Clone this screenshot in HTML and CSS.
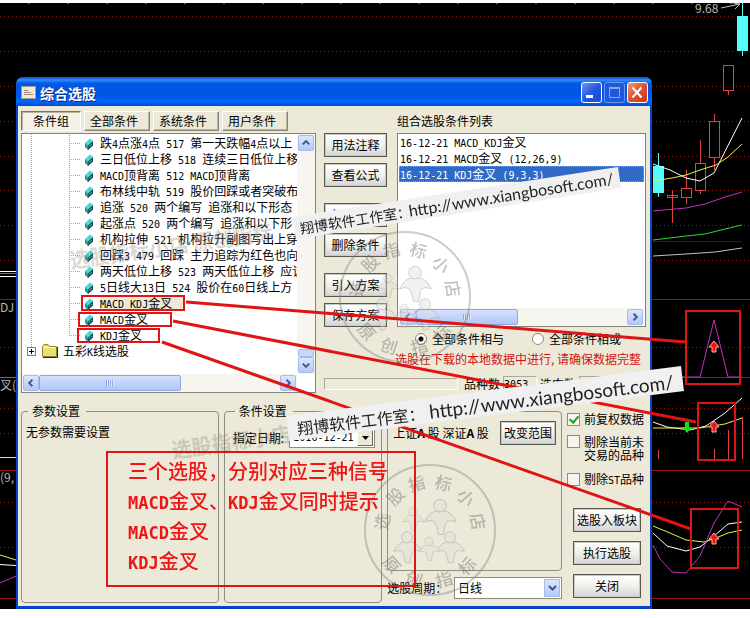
FILE: index.html
```html
<!DOCTYPE html>
<html lang="zh">
<head>
<meta charset="UTF-8">
<title>综合选股</title>
<link rel="stylesheet" href="styles.css">
</head>
<body>
<div class="desktop">
  <!-- 背景K线图 -->
  <svg class="layer" viewBox="0 0 750 618" aria-hidden="true">
    <g class="grid-dots">
      <path d="M0 16.5H736M0 51.5H736M0 86.5H750M0 121.5H750M0 156.5H750M0 190.5H750M0 225.5H750M0 260.5H750M0 347.5H750M0 408.5H750M0 433.5H750M0 502.5H750M0 547.5H750"/>
    </g>
    <path class="grid-line" d="M0 299.5H750M0 377.5H750M0 470.5H750M0 598.5H750"/>
    <path class="ticks" d="M28 3.5H750"/>
    <g class="fall">
      <path d="M742.5 3V56M658.5 153V197"/>
      <rect x="737" y="16" width="11" height="35"/>
      <rect x="653" y="166" width="11" height="27"/>
    </g>
    <g class="rise">
      <rect x="723.5" y="65.5" width="10" height="25"/>
      <rect x="709.5" y="121.5" width="10" height="36"/>
      <rect x="695.5" y="163.5" width="10" height="27"/>
      <rect x="681.5" y="188.5" width="10" height="9"/>
      <rect x="667.5" y="195.5" width="10" height="2"/>
      <path d="M728.5 90V95M714.5 114V121M714.5 157V170M700.5 140V163M700.5 190V194M686.5 170V188M686.5 197V204M672.5 190V223"/>
    </g>
    <g class="curve white">
      <path d="M653 164L670 170L686 178L700 181L714 173L742 118"/>
      <path d="M653 422L667 427L690 430L706 426L725 413L742 398"/>
      <path d="M653 533L667 546L686 551L700 547L714 536L728 524L742 522"/>
      <path d="M0 271.5H16M0 276.5H16M0 564.5L16 565.5"/>
    </g>
    <g class="curve yellow">
      <path d="M653 181L672 178L686 175L700 170L716 165L728 157L742 144"/>
      <path d="M653 428L700 428L725 424L742 418"/>
      <path d="M653 526L670 533L686 540L704 542L716 538L728 533L742 530"/>
      <path d="M0 457.5H16M0 555L16 560"/>
    </g>
    <g class="curve pink">
      <path d="M653 211L686 208L705 204L725 197L742 192"/>
      <path d="M675 377H700L714 320L728 377H742"/>
      <path d="M653 545L660 559L672 572L686 573L700 556L714 523L728 501L742 507"/>
      <path d="M0 377.5H16M0 273.5H16M0 583L16 576"/>
    </g>
    <path class="curve green" d="M653 240L686 236L705 234L725 229L742 225"/>
    <path class="curve blue" d="M653 241.5H742"/>
    <path class="curve silver" d="M653 256L686 254L715 252L742 248"/>
    <path class="rise" d="M658.5 450V459M714.5 449V459M728.5 430V459M742.5 417V459"/>
    <path class="curve silver" d="M721 8L740 4M733 3L740 4L735 9"/>
    <g class="chart-text">
      <text x="695" y="13">9.68</text>
      <text x="0" y="312">DJ</text>
      <text x="0" y="390">叉(</text>
      <text x="0" y="482">(9,</text>
    </g>
  </svg>

  <div class="dialog">
    <div class="titlebar">
      <svg class="app-icon" width="15" height="13" viewBox="0 0 15 13" aria-hidden="true">
        <rect x=".5" y=".5" width="14" height="12" fill="#eee9dc" stroke="#a49c8c"/>
        <path d="M3 4.5h4M3 6.5h7M3 8.5h9" stroke="#a08f78"/>
      </svg>
      <h1>综合选股</h1>
      <button class="win-btn" aria-label="最小化"><svg width="21" height="21" viewBox="0 0 21 21"><path d="M5 14.5h7" stroke="#fff" stroke-width="3"/></svg></button>
      <button class="win-btn dim" aria-label="最大化"><svg width="21" height="21" viewBox="0 0 21 21"><path d="M5.5 6v9.5h10V6" fill="none" stroke="#86a8f0"/><path d="M5 6h11" stroke="#86a8f0" stroke-width="2"/></svg></button>
      <button class="win-btn close" aria-label="关闭窗口"><svg width="21" height="21" viewBox="0 0 21 21"><path d="M5.5 5.5l9 10M14.5 5.5l-9 10" stroke="#fff" stroke-width="2"/></svg></button>
    </div>

    <div class="client">
      <div class="upper">
        <div class="left">
          <div class="tabs">
            <button class="tab active">条件组</button>
            <button class="tab">全部条件</button>
            <button class="tab">系统条件</button>
            <button class="tab">用户条件</button>
          </div>
          <div class="tree-box">
            <div class="tree">
              <ul class="items">
                <li><svg class="gem"><use href="#gem"/></svg>跌<i>4</i>点涨<i>4</i>点<i> 517 </i>第一天跌幅<i>4</i>点以上</li>
                <li><svg class="gem"><use href="#gem"/></svg>三日低位上移<i> 518 </i>连续三日低位上移</li>
                <li><svg class="gem"><use href="#gem"/></svg><i>MACD</i>顶背离<i> 512 MACD</i>顶背离</li>
                <li><svg class="gem"><use href="#gem"/></svg>布林线中轨<i> 519 </i>股价回踩或者突破布</li>
                <li><svg class="gem"><use href="#gem"/></svg>追涨<i> 520 </i>两个编写<i> </i>追涨和以下形态</li>
                <li><svg class="gem"><use href="#gem"/></svg>起涨点<i> 520 </i>两个编写<i> </i>追涨和以下形</li>
                <li><svg class="gem"><use href="#gem"/></svg>机构拉伸<i> 521 </i>机构拉升副图写出上穿</li>
                <li><svg class="gem"><use href="#gem"/></svg>回踩<i>3 479 </i>回踩<i> </i>主力追踪为红色也向</li>
                <li><svg class="gem"><use href="#gem"/></svg>两天低位上移<i> 523 </i>两天低位上移<i> </i>应该</li>
                <li><svg class="gem"><use href="#gem"/></svg><i>5</i>日线大<i>13</i>日<i> 524 </i>股价在<i>60</i>日线上方</li>
                <li><svg class="gem"><use href="#gem"/></svg><span class="picked"><i>MACD KDJ</i>金叉</span></li>
                <li><svg class="gem"><use href="#gem"/></svg><i>MACD</i>金叉</li>
                <li><svg class="gem"><use href="#gem"/></svg><i>KDJ</i>金叉</li>
              </ul>
              <div class="folder">
                <span class="expander"></span>
                <svg width="16" height="14" viewBox="0 0 16 14" aria-hidden="true"><path d="M.5 12.5V2.5l1.500-2h4l1.500 2h7v10z" fill="#e6e06c" stroke="#8a8632"/><path d="M1.500 3.5h12" stroke="#fffcc0"/><path d="M1 13.5h14.500V3" fill="none" stroke="#222"/></svg>
                <span>五彩<i>K</i>线选股</span>
              </div>
            </div>
            <div class="vscroll">
              <button class="sb" aria-label="向上滚动"><svg viewBox="0 0 15 15"><path d="M4 9l3.500-3.500L11 9"/></svg></button>
              <span class="vthumb"></span>
              <button class="sb" aria-label="向下滚动"><svg viewBox="0 0 15 15"><path d="M4 6l3.500 3.500L11 6"/></svg></button>
            </div>
            <div class="hscroll">
              <button class="sb" aria-label="向左滚动"><svg viewBox="0 0 15 15"><path d="M9 4L5.500 7.500L9 11"/></svg></button>
              <span class="hthumb wide"><b></b></span>
              <button class="sb" aria-label="向右滚动"><svg viewBox="0 0 15 15"><path d="M6 4l3.500 3.500L6 11"/></svg></button>
            </div>
          </div>
        </div>

        <div class="middle">
          <button class="btn">用法注释</button>
          <button class="btn">查看公式</button>
          <button class="btn gap">加入条件</button>
          <button class="btn">删除条件</button>
          <button class="btn gap">引入方案</button>
          <button class="btn">保存方案</button>
        </div>

        <div class="right">
          <h2>组合选股条件列表</h2>
          <div class="list-box">
            <ul class="list">
              <li><i>16-12-21 MACD_KDJ</i>金叉</li>
              <li><i>16-12-21 MACD</i>金叉<i> (12,26,9)</i></li>
              <li class="selected"><i>16-12-21 KDJ</i>金叉<i> (9,3,3)</i></li>
            </ul>
            <div class="hscroll">
              <button class="sb" aria-label="列表向左滚动"><svg viewBox="0 0 15 15"><path d="M9 4L5.500 7.500L9 11"/></svg></button>
              <span class="hthumb half"><b></b></span>
              <button class="sb" aria-label="列表向右滚动"><svg viewBox="0 0 15 15"><path d="M6 4l3.500 3.500L6 11"/></svg></button>
            </div>
          </div>
          <div class="radios">
            <label><input type="radio" name="mode" checked>全部条件相与</label>
            <label><input type="radio" name="mode">全部条件相或</label>
          </div>
          <p class="warn">选股在下载的本地数据中进行, 请确保数据完整</p>
        </div>

        <div class="status">
          <span class="progress"></span>
          <span>品种数</span><output class="count"><i>3053</i></output>
          <span>选中数</span><output class="count"></output>
        </div>
      </div>

      <div class="lower">
        <fieldset class="params">
          <legend>参数设置</legend>
          <p>无参数需要设置</p>
        </fieldset>
        <fieldset class="conds">
          <legend>条件设置</legend>
          <div class="date-row">
            <label for="date">指定日期:</label>
            <span class="combo classic">
              <select id="date"><option>2016-12-21</option></select>
              <span class="arrow"><svg width="9" height="5" viewBox="0 0 9 5"><path d="M1 0h7L4.500 4z"/></svg></span>
            </span>
          </div>
        </fieldset>
        <div class="range-col">
          <div class="range">
            <span>上证<b>A</b> 股 深证<b>A</b> 股</span>
            <button class="btn">改变范围</button>
          </div>
          <div class="period">
            <label for="period">选股周期：</label>
            <span class="combo">
              <select id="period"><option>日线</option></select>
              <span class="arrow"><svg width="9" height="7" viewBox="0 0 9 7"><path d="M1 1l3.500 3.500L8 1" fill="none" stroke="#3c5480" stroke-width="2"/></svg></span>
            </span>
          </div>
        </div>
        <div class="actions">
          <label class="check"><input type="checkbox" checked>前复权数据</label>
          <label class="check two"><input type="checkbox"><span>剔除当前未<br>交易的品种</span></label>
          <label class="check"><input type="checkbox"><span>剔除<i>ST</i>品种</span></label>
          <div class="run">
            <button class="btn">选股入板块</button>
            <button class="btn">执行选股</button>
            <button class="btn">关闭</button>
          </div>
        </div>
      </div>
    </div>
  </div>

  <!-- 标注层：水印、红框、连线 -->
  <svg class="layer notes" viewBox="0 0 750 618">
    <defs>
      <symbol id="gem" viewBox="0 0 10 12">
        <path d="M1 5L6 .5L9 3L4 7.500z" fill="#4cd8d4"/>
        <path d="M1 5L4 7.500V12L1 9z" fill="#149c9c"/>
        <path d="M4 7.500L9 3V7.500L4 12z" fill="#0c4c50"/>
        <path d="M4.500 9L8 6" stroke="#38b8b8"/>
      </symbol>
      <g id="person">
        <path d="M0 10C-8 9-13 14-17 22Q-11 19-6 22Q-3 27-2 36H4Q5 27 7 22Q12 19 18 22C15 14 9 9 0 10Z"/>
        <circle cx="0" cy="4" r="7"/>
      </g>
      <g id="seal">
        <circle r="65"/>
        <g class="people">
          <use href="#person" transform="translate(-17 -21) scale(.6)"/>
          <use href="#person" transform="translate(10 -28) scale(.9)"/>
          <use href="#person" transform="translate(-23 4) scale(.8)"/>
          <use href="#person" transform="translate(20 4) scale(.8)"/>
          <use href="#person" transform="translate(-1 9) scale(.6)"/>
        </g>
        <g class="seal-text">
          <text transform="rotate(-80) translate(0 -42)">选</text>
          <text transform="rotate(-46) translate(0 -42)">股</text>
          <text transform="rotate(-16) translate(0 -42)">指</text>
          <text transform="rotate(16) translate(0 -42)">标</text>
          <text transform="rotate(48) translate(0 -42)">小</text>
          <text transform="rotate(80) translate(0 -42)">店</text>
          <text transform="rotate(48) translate(0 58)">原</text>
          <text transform="rotate(18) translate(0 58)">创</text>
          <text transform="rotate(-16) translate(0 58)">指</text>
          <text transform="rotate(-46) translate(0 58)">标</text>
        </g>
      </g>
      <path id="up" d="M0-6L5 0H2V5H-2V0H-5Z"/>
    </defs>

    <g class="seal">
      <use href="#seal" x="405" y="297"/>
      <use href="#seal" x="430" y="530"/>
    </g>
    <g class="ghost">
      <text transform="translate(71 268) rotate(-8)">选股指标小店 原创指标</text>
      <text transform="translate(173 458) rotate(-8)">选股指标小店</text>
    </g>

    <path class="link" d="M186 302L686 342M173 321L696 422M162 342L691 529"/>
    <g class="frame">
      <rect x="82" y="296" width="102" height="14"/>
      <rect x="79" y="313" width="92" height="13"/>
      <rect x="78" y="329" width="81" height="13"/>
      <rect x="107" y="452" width="308" height="134"/>
      <rect x="686" y="311" width="54" height="73"/>
      <rect x="698" y="403" width="37" height="57"/>
      <rect x="691" y="509" width="47" height="59"/>
    </g>
    <g class="arrow-up">
      <use href="#up" x="714" y="347"/>
      <use href="#up" x="714" y="427"/>
      <use href="#up" x="714" y="539"/>
    </g>
    <use class="arrow-down" href="#up" transform="translate(687 427) scale(1 -1)"/>

    <g class="red-note">
      <text x="128" y="479">三个选股，分别对应三种信号</text>
      <text x="128" y="509"><tspan class="mono">MACD</tspan>金叉、<tspan class="mono" x="228">KDJ</tspan>金叉同时提示</text>
      <text x="128" y="539"><tspan class="mono">MACD</tspan>金叉</text>
      <text x="128" y="569"><tspan class="mono">KDJ</tspan>金叉</text>
    </g>

    <path class="banner" d="M292 217L618 167L621 188L296 239Z"/>
    <text class="banner-text small" transform="translate(301 234) rotate(-9)">翔博软件工作室：<tspan class="url" x="110">http://www.xiangbosoft.com/</tspan></text>
    <path class="banner" d="M286 416L681 366L684 391L289 441Z"/>
    <text class="banner-text" transform="translate(298 435) rotate(-7)">翔博软件工作室：<tspan class="url" x="133">http://www.xiangbosoft.com/</tspan></text>
  </svg>
</div>
</body>
</html>
```
FILE: styles.css
```css
* {
    box-sizing: border-box;
}
body {
    margin: 0;
    background: #fff;
    color: #000;
    font: 12px/16px "Noto Sans CJK SC", sans-serif;
}
h1, h2, p, ul {
    margin: 0;
    padding: 0;
    list-style: none;
    font-size: 12px;
    font-weight: normal;
}
button, select {
    font: inherit;
    color: #000;
    padding: 0;
    border-radius: 0;
}
i {
    font: 10px/12px "DejaVu Sans Mono", monospace;
    white-space: pre;
}
.desktop {
    background: #000;
    border-top: 3px solid #fff;
    padding: 74px 98px 0 16px;
}
.layer {
    position: absolute;
    top: 0;
    left: 0;
    width: 100%;
    height: auto;
}

/* 背景图 */
.grid-dots {
    stroke: #8c1410;
    stroke-dasharray: 1 3;
}
.grid-line {
    stroke: #a01014;
}
.ticks {
    stroke: #a030a0;
    stroke-dasharray: 2 37;
}
.fall {
    stroke: #54fcfc;
    fill: #54fcfc;
}
.fall rect {
    stroke: none;
}
.rise {
    stroke: #d84444;
    fill: #000;
}
.curve {
    fill: none;
    stroke-width: 1;
}
.white { stroke: #fff; }
.yellow { stroke: #f0f040; }
.pink { stroke: #c030c0; }
.green { stroke: #30d830; }
.blue { stroke: #1010b0; }
.silver { stroke: #c0c0c0; }
.chart-text {
    fill: #b8b8b8;
    font-size: 12px;
}

/* 对话框 */
.dialog {
    position: relative;
    background: #0842c8;
    border-radius: 7px 7px 0 0;
    padding: 0 2px 3px;
}
.titlebar {
    display: flex;
    align-items: center;
    gap: 2px;
    height: 29px;
    margin: 0 -2px;
    padding: 2px 4px 0 5px;
    border-radius: 7px 7px 0 0;
    background: linear-gradient(#0848c8, #3090ff 10%, #0458e4 22%, #0054e4 60%, #0066fc 85%, #0048d0);
}
.titlebar h1 {
    flex: 1;
    margin-left: 2px;
    color: #fff;
    font-size: 14px;
    font-weight: bold;
    text-shadow: 1px 1px #102878;
}
.win-btn {
    width: 21px;
    height: 21px;
    border: 1px solid #fff;
    border-radius: 3px;
    background: linear-gradient(135deg, #6c94f4, #2458e0 50%, #1c48d0);
}
.win-btn svg {
    display: block;
    margin: -1px;
}
.win-btn.dim {
    border-color: #6c94f0;
    background: #2058dc;
}
.win-btn.close {
    background: linear-gradient(135deg, #f09878, #e05030 50%, #c83c18);
}
.client {
    background: #ece9d8;
    padding: 5px 4px 3px 3px;
}
.upper {
    display: grid;
    grid-template-columns: 294fr 63px 250fr;
    gap: 0 8px;
}
.tabs {
    display: flex;
    gap: 3px;
}
.tab {
    width: 66px;
    height: 20px;
    padding-right: 6px;
    border: 1px solid;
    border-color: #fff #8c8674 #8c8674 #fff;
    box-shadow: inset -1px -1px #b8b4a0;
    background: #ece9d8;
}
.tab.active {
    width: 60px;
    padding: 0;
    border-color: #7c7868 #fff #fff #7c7868;
    box-shadow: inset 1px 1px #b8b4a0;
    background: #f4f2e8;
}
.tree-box, .list-box {
    background: #fff;
    border: 1px solid #848478;
}
.tree-box {
    display: grid;
    grid-template: 240px 18px / minmax(0, 1fr) 18px;
    margin-top: 2px;
}
.tree {
    overflow: hidden;
    padding: 1px 0 0 9px;
    background: repeating-linear-gradient(#a8a490 0 1px, #fff 1px 2px) 9px 0 / 1px 216px no-repeat;
}
.items {
    margin-left: 38px;
    background: repeating-linear-gradient(#a8a490 0 1px, #fff 1px 2px) 0 0 / 1px 200px no-repeat;
}
.items li {
    height: 16px;
    white-space: nowrap;
    padding-left: 15px;
    background: repeating-linear-gradient(90deg, #a8a490 0 1px, #fff 1px 2px) 0 8px / 12px 1px no-repeat;
}
.gem {
    width: 10px;
    height: 12px;
    margin: -2px 6px 0 0;
    vertical-align: middle;
}
.picked {
    display: inline-block;
    height: 14px;
    line-height: 16px;
    padding-right: 12px;
    background: #ece9d8;
}
.folder {
    display: flex;
    align-items: center;
    gap: 5px;
    height: 16px;
    margin-left: -4px;
}
.folder svg {
    margin-left: 1px;
}
.expander {
    width: 9px;
    height: 9px;
    border: 1px solid #808080;
    background: linear-gradient(#000, #000) center / 5px 1px no-repeat, linear-gradient(#000, #000) center / 1px 5px no-repeat, #fff;
}
.vscroll, .hscroll {
    display: flex;
    background: #f6f5f0;
    padding: 1px;
}
.vscroll {
    flex-direction: column;
    justify-content: space-between;
}
.sb {
    width: 16px;
    height: 16px;
    flex: none;
    border: 1px solid #a8bcec;
    border-radius: 2px;
    background: linear-gradient(#dce6fe, #b4c8f6);
}
.sb svg {
    display: block;
    fill: none;
    stroke: #405884;
    stroke-width: 2;
}
.vthumb {
    height: 8px;
    margin-top: auto;
    border: 1px solid #a0b8f0;
    border-radius: 2px;
    background: #c8d8fc;
}
.hscroll .sb:last-child {
    margin-left: auto;
}
.hthumb {
    display: flex;
    justify-content: center;
    align-items: center;
    border: 1px solid #8ca8e4;
    border-radius: 2px;
    background: linear-gradient(#d4e0fe, #b0c6f6);
}
.hthumb b {
    width: 8px;
    height: 6px;
    background: repeating-linear-gradient(90deg, #8ca4e0 0 1px, #e4ecff 1px 2px);
}
.wide {
    width: 52%;
}
.half {
    width: 42%;
}

/* 按钮 */
.btn {
    height: 24px;
    border: 1px solid #58584c;
    background: linear-gradient(#fff, #f0f0ec 50%, #d4d4d8);
    box-shadow: inset 0 0 0 1px #c8c8c4;
    line-height: 20px;
    white-space: nowrap;
}
.middle {
    display: flex;
    flex-direction: column;
    gap: 6px;
    padding-top: 22px;
}
.middle .gap {
    margin-top: 10px;
}
.right {
    padding-left: 2px;
}
.right h2 {
    height: 22px;
    line-height: 20px;
}
.list-box {
    display: flex;
    flex-direction: column;
    justify-content: space-between;
    height: 194px;
    padding: 0 1px;
}
.list li {
    padding-left: 1px;
}
.list .selected {
    background: #316ac5;
    color: #fff;
    outline: 1px dotted #c89850;
    outline-offset: -1px;
}
.radios {
    display: flex;
    gap: 28px;
    padding: 4px 0 4px 18px;
}
.radios label {
    display: flex;
    align-items: center;
    gap: 5px;
    white-space: nowrap;
}
.radios input {
    appearance: none;
    width: 12px;
    height: 12px;
    margin: 0;
    border: 1px solid #8c8878;
    border-radius: 50%;
    background: #fff;
}
.radios input:checked {
    background: radial-gradient(#000 2px, #fff 3px);
}
.warn {
    color: #d01414;
    white-space: nowrap;
    margin: 0 -2px;
}
.status {
    grid-column: 2 / 4;
    display: flex;
    gap: 3px;
    height: 16px;
    margin: -17px 0 0;
}
.status span:nth-child(2) {
    margin-left: 3px;
}
.progress {
    width: 134px;
    height: 12px;
    margin-top: 2px;
}
.progress, .count {
    border: 1px solid;
    border-color: #aca899 #fff #fff #aca899;
}
.count {
    width: 34px;
    line-height: 12px;
}

/* 下半部分 */
.lower {
    display: grid;
    grid-template-columns: 198fr 159fr 175fr 79px;
    gap: 5px;
    margin-top: 10px;
    height: 200px;
}
fieldset {
    min-width: 0;
    margin: 0;
    padding: 5px 4px 0;
    border: 1px solid #908e80;
    border-radius: 4px;
}
legend {
    margin-left: 2px;
    padding: 0 6px 0 4px;
}
.conds {
    padding: 9px 6px 0 8px;
}
.date-row, .period {
    display: flex;
    align-items: center;
    justify-content: space-between;
    white-space: nowrap;
}
.combo {
    display: flex;
    background: #fff;
    border: 1px solid #8c8c80;
    padding: 1px;
}
.combo select {
    appearance: none;
    border: 0;
    background: #fff;
    width: 88px;
    height: 18px;
    padding-left: 2px;
}
.classic select {
    width: 66px;
    height: 16px;
    font: 10px/16px "DejaVu Sans Mono", monospace;
}
.arrow {
    display: flex;
    align-items: center;
    justify-content: center;
    width: 16px;
    border: 1px solid #a8bcec;
    background: linear-gradient(#dce6fe, #b4c8f6);
}
.classic .arrow {
    border-color: #fff #6c6a60 #6c6a60 #fff;
    background: #ece9d8;
}
.range-col {
    display: flex;
    flex-direction: column;
    gap: 6px;
    padding-top: 8px;
}
.range {
    display: flex;
    justify-content: space-between;
    align-items: flex-start;
    height: 160px;
    padding: 9px 5px 0;
    border: 1px solid #908e80;
    border-radius: 4px;
    white-space: nowrap;
}
.range span {
    padding-top: 4px;
}
.range .btn {
    width: 56px;
}
.actions {
    display: flex;
    flex-direction: column;
    padding-top: 8px;
}
.check {
    display: flex;
    gap: 4px;
    align-items: center;
    height: 16px;
    white-space: nowrap;
}
.check.two {
    align-items: flex-start;
    height: 28px;
    margin: 8px 0;
    line-height: 13px;
}
.check input {
    appearance: none;
    flex: none;
    width: 13px;
    height: 13px;
    margin: 0;
    border: 1px solid #8c8c84;
    background: #f6f4ee;
}
.check input:checked::before {
    content: "";
    display: block;
    width: 4px;
    height: 7px;
    margin: 0 3px;
    border: solid #21a121;
    border-width: 0 2px 2px 0;
    transform: rotate(40deg);
}
.run {
    display: flex;
    flex-direction: column;
    gap: 9px;
    margin: auto 5px 5px 6px;
}

/* 标注层 */
.notes {
    pointer-events: none;
    font-family: "Noto Sans CJK SC", sans-serif;
}
.seal {
    fill: none;
    stroke: #808080;
    stroke-width: 2;
    opacity: .4;
}
.people {
    fill: #ddd;
    stroke-width: 1;
}
.seal-text {
    fill: #666;
    stroke: none;
    font-size: 17px;
    font-weight: 500;
    text-anchor: middle;
}
.ghost {
    fill: #807868;
    font-size: 20px;
    font-weight: bold;
    opacity: .3;
}
.link {
    stroke: #e01414;
    stroke-width: 3;
}
.frame {
    fill: none;
    stroke: #e01414;
    stroke-width: 2;
}
.arrow-up {
    fill: #f01010;
    stroke: #ffb0a0;
}
.arrow-down {
    fill: #10e010;
}
.red-note {
    fill: #f01414;
    font-size: 20px;
    font-weight: 500;
}
.mono {
    font: bold 17px "DejaVu Sans Mono", monospace;
}
.banner {
    fill: #f0f0f0;
}
.banner-text {
    fill: #222;
    font-size: 16px;
}
.banner-text.small {
    font-size: 14px;
}
.url {
    font-family: Lato, sans-serif;
    font-size: 19px;
}
.small .url {
    font-size: 16px;
}
```
